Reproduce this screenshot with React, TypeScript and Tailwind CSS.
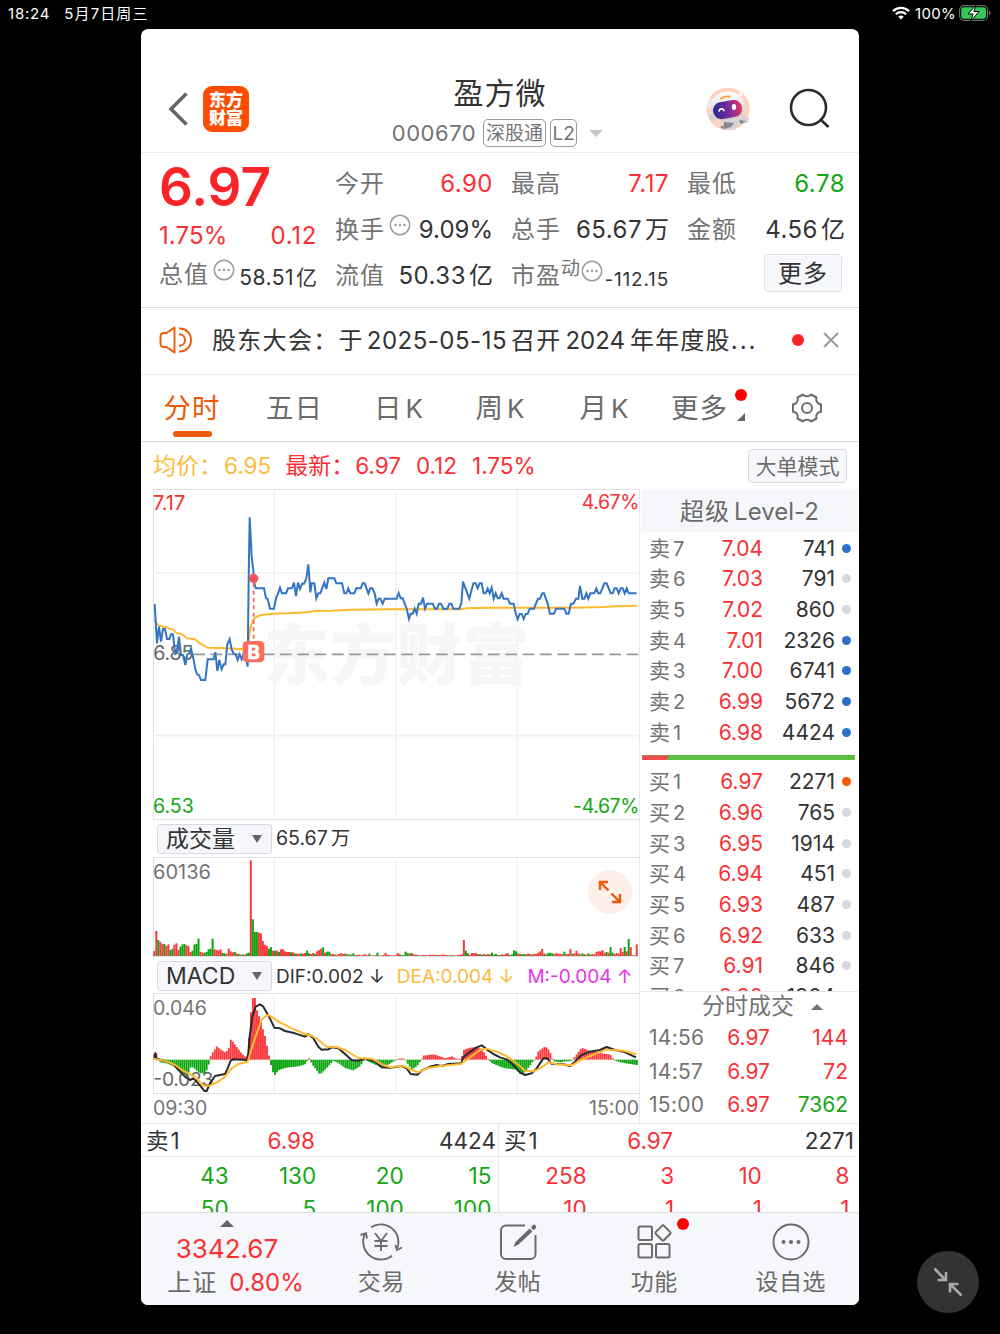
import type { ReactNode } from "react";

const RED = "text-[#fa3034]";
const GREEN = "text-[#14a614]";

/* ---------- chart data (three units per pixel) ---------- */

const PRICE =
  "29,357 36,475 42,425 48,470 54,432 60,432 66,462 73,462 78,448 84,448 91,510 97,490 102,455 108,510 114,510 121,540 127,508 133,505 138,490 145,520 151,552 156,568 162,570 168,585 181,585 188,523 206,523 211,502 217,558 223,525 230,553 236,538 241,538 247,478 254,462 260,493 266,506 272,508 278,525 284,508 290,523 296,505 302,515 308,545 311,280 314,97 320,215 326,265 327,290 332,310 357,310 363,340 368,342 375,371 387,371 393,340 399,326 405,308 411,325 423,325 429,310 441,310 447,293 453,333 459,293 465,312 471,296 477,296 484,280 490,238 496,322 500,295 508,295 514,340 520,325 526,325 538,293 544,312 550,280 568,280 574,295 591,295 598,325 604,325 610,310 616,325 628,325 634,310 647,310 653,295 659,295 670,326 676,310 682,310 689,325 695,356 701,341 706,341 713,356 719,341 755,341 761,324 767,340 773,340 779,355 785,371 792,402 797,386 803,386 809,371 815,386 821,356 828,356 834,338 840,371 846,356 863,356 870,371 876,371 882,356 888,356 895,371 907,371 913,356 919,356 925,371 943,371 949,355 954,290 973,341 985,295 992,295 998,310 1004,295 1010,295 1016,325 1022,325 1028,310 1034,325 1040,308 1046,341 1052,325 1058,340 1064,340 1070,325 1076,341 1088,341 1095,356 1106,356 1112,385 1118,403 1124,387 1130,387 1136,402 1142,387 1148,387 1154,371 1167,371 1173,356 1179,341 1185,341 1192,325 1197,325 1208,356 1215,386 1227,386 1233,371 1258,371 1264,386 1271,386 1278,356 1285,356 1293,341 1300,341 1305,303 1312,341 1318,341 1324,325 1330,341 1336,325 1348,325 1354,310 1360,325 1366,325 1378,295 1385,295 1397,325 1403,325 1409,310 1415,310 1421,325 1427,310 1433,310 1439,325 1445,310 1451,325 1475,325";

const AVERAGE =
  "29,405 35,415 42,422 66,427 75,432 84,433 96,445 110,447 126,460 150,463 165,475 188,488 245,490 285,492 305,492 312,460 316,430 324,405 335,395 350,390 380,386 430,385 485,382 510,378 560,377 620,374 735,373 945,373 965,370 1035,368 1285,368 1375,366 1415,364 1475,362";

const DIF =
  "28,712 31,700 34,716 60,722 85,733 105,755 120,770 135,780 145,775 155,785 168,800 178,813 185,813 195,790 210,768 240,762 248,745 257,722 265,718 305,720 310,700 314,650 322,590 332,560 345,553 355,560 372,590 388,623 405,625 420,633 450,640 480,650 490,643 505,655 520,680 530,689 550,688 560,682 580,685 600,702 620,720 640,722 660,716 690,725 710,742 735,743 755,740 770,738 785,745 797,762 817,764 830,752 855,740 875,735 890,738 910,732 948,730 955,712 970,700 993,683 1010,676 1025,688 1045,702 1065,712 1085,718 1105,735 1125,757 1140,765 1160,760 1175,745 1195,715 1207,715 1220,732 1255,733 1275,738 1290,725 1310,705 1335,695 1365,690 1385,681 1410,690 1435,695 1473,712";

const DEA =
  "27,717 60,722 90,735 120,755 150,770 175,797 195,797 220,785 240,770 260,745 280,732 308,725 320,685 335,640 350,600 365,585 375,587 400,605 440,625 480,642 500,647 520,660 545,680 575,681 600,690 640,714 680,716 710,732 735,742 765,738 780,740 800,750 820,757 845,745 885,738 947,732 975,712 1005,690 1025,686 1055,695 1085,708 1115,730 1140,752 1165,754 1185,745 1210,727 1235,733 1280,736 1305,722 1335,708 1385,689 1435,692 1475,703";

const MACD_KEYS: [number, number][] = [
  [27, 15], [33, 22], [39, 5], [45, -8], [60, -10], [75, -15], [95, -25], [115, -45], [126, -50], [138, -20], [150, -28], [162, -40], [180, -42], [190, -20], [194, 5], [203, 22], [215, 40], [225, 32], [240, 22], [250, 30], [257, 60], [265, 52], [275, 38], [290, 18], [302, 8], [308, 6], [314, 110], [318, 148], [322, 185], [332, 185], [335, 150], [345, 120], [360, 70], [373, 6], [376, -10], [385, -42], [390, -46], [400, -32], [420, -25], [440, -22], [460, -20], [480, -14], [487, -3], [493, 5], [500, -12], [525, -45], [545, -25], [565, -3], [580, -10], [600, -25], [625, -32], [645, -20], [660, 3], [668, -5], [690, -15], [715, -22], [735, -12],
  [750, -2], [765, 4], [780, 3], [785, -8], [800, -30], [815, -20], [827, -3], [835, 12], [865, 16], [885, 10], [900, 4], [920, 10], [935, 2], [948, 3], [957, 30], [975, 36], [1000, 38], [1015, 25], [1028, 3], [1040, -10], [1075, -25], [1115, -30], [1125, -44], [1140, -38], [1160, -10], [1172, 5], [1180, 25], [1200, 40], [1213, 28], [1225, -5], [1245, -8], [1265, -5], [1280, -4], [1290, 10], [1310, 36], [1335, 26], [1375, 18], [1395, 16], [1407, -2], [1435, -10], [1475, -16],
];

function macdAt(x: number) {
  for (let i = 1; i < MACD_KEYS.length; i++) {
    const [x1, h1] = MACD_KEYS[i];
    if (x <= x1) {
      const [x0, h0] = MACD_KEYS[i - 1];
      return h0 + ((h1 - h0) * (x - x0)) / (x1 - x0);
    }
  }
  return -16;
}

// Runs of one-minute bars, each with the minute it starts at; r = rise, g = fall.
const VOLUME_RUNS: [number, string][] = [
  [0, "r15 r75 g48 r42 r36 g36 r30 r35 g18 g22 r34 r38 r18 r15 g38 g38 r38 r30 r14 g16 g35 g36 r32 r12 r10 g10 g12 g20 g52 r20 r18 r17 r20 r26 r16 r14 r11 g12 r8 r6 r8"],
  [36, "r11 r14 g9 r8 r5"],
  [29, "g52 r20 r18 r17 r20 r26 r16 r14 r11 g12 r6 r8 r6 g7 r5 r6"],
  [22, "r32 r12 r10 g10 g12 g20 g22"],
  [34, "g9 g8 r6 r22 r14 r11 g12 r8 g6 r4 g5 r4 g8 g10"],
  [48, "r287 g110 g72 g72 r70 r68 r45 r34 r30 g22 g27 r16 g16 r16 g12 r20 r20 r14 r12 r12 g11 r11 g7 r7 r6 g8 r7 r9 g16 g8 r6 r9 g6 r14 r18 r22 g26 r10 g13 g13 r6 r6 g4 r4 r6 r9 r6 g7 r5 g5 g4 g8 r3 r4 r4 r2 r4 r5 r2 r3 g2 r2 r3"],
  [107, "g7 r2 r2 g2 g10 r2 r2 r3 r9 r4 r3 r2 r2 r2 r9 r6 g3 g3 g13 g9 r8 g9 r5 r5 g3 r2 r3 r3 r3 r2 r4 r3 r4 r3 g3 r3 r4 r4 r3 r3 g2 r3 g2 r2 r3 r3"],
  [153, "r5 r48 g16 g8 r4 r9 r8 r9 g5 r6 g4 r6 g4 r5 r5 g10 g4 g6 r3 g3 r5 r3 r7 r8 g3 g5"],
  [179, "g17 g14 r8 r6 g5 g6 r5 r8 g5 r5 r6 r6 r10 r14 r21 g7 r5 g9 g10 g8 r6 r9 r7 r6 r5"],
  [204, "g13 r6 r6 r21 g7 r8 r16 r8 g5 g8 r6 r4 g8 g4 r6 r5"],
  [220, "r12 r14 r14 r18 r10 g12 r10 g27 g10 r6 r9 r7 r24 r12 g27 r14 g51 r27"],
  [240, "r35"],
];

const VOLUME_BARS: string[] = Array.from({ length: 241 }, () => "r2");
VOLUME_RUNS.forEach(([start, run]) => {
  run.split(" ").forEach((bar, i) => {
    VOLUME_BARS[start + i] = bar;
  });
});
["g28", "g35", "g36", "r32", "r12", "g52"].forEach((bar, i) => {
  VOLUME_BARS[[13, 14, 15, 16, 18, 22][i]] = bar;
});

/* ---------- charts ---------- */

function GridLines({ top, bottom }: { top: number; bottom: number }) {
  return (
    <g stroke="#f0f1f6" strokeWidth="5">
      {[388, 752, 1117].map((x) => (
        <line key={x} x1={x} x2={x} y1={top} y2={bottom} />
      ))}
    </g>
  );
}

function PriceChart() {
  return (
    <svg width="486" height="330" viewBox="24 12 1458 990" className="-mt-px -ml-px block">
      <GridLines top={22} bottom={995} />
      <g stroke="#f0f1f6" strokeWidth="5">
        <line x1="24" x2="1482" y1="264" y2="264" />
        <line x1="24" x2="1482" y1="752" y2="752" />
      </g>
      <text x="356" y="581" fontSize="198" fontWeight="900" fill="#f6f6f7" textLength="796">
        东方财富
      </text>
      <text x="25" y="524" fontSize="59" fill="#666" textLength="120">
        6.85
      </text>
      <line x1="145" x2="1480" y1="508" y2="508" stroke="#999" strokeWidth="5" strokeDasharray="35 17" />
      <polyline points={AVERAGE} fill="none" stroke="#fdb92f" strokeWidth="6" strokeLinejoin="round" />
      <polyline points={PRICE} fill="none" stroke="#3474c0" strokeWidth="6" />
      <line x1="326" x2="326" y1="295" y2="470" stroke="#f96058" strokeWidth="5" strokeDasharray="12 10" />
      <circle cx="326" cy="280" r="14" fill="#f0555a" />
      <rect x="293" y="468" width="65" height="64" rx="13" fill="#fa6e60" />
      <text x="326" y="521" fontSize="56" fontWeight="700" fill="#fff" textAnchor="middle" stroke="#fff" strokeWidth="2">
        B
      </text>
    </svg>
  );
}

function VolumeChart() {
  return (
    <svg width="486" height="98" viewBox="24 111 1458 294" className="-ml-px block">
      <GridLines top={118} bottom={400} />
      {VOLUME_BARS.map((bar, i) => {
        const h = Number(bar.slice(1));
        return (
          <rect
            key={i}
            x={25 + i * 6.03}
            y={405 - h}
            width="6"
            height={h}
            fill={bar[0] === "r" ? "#f8383c" : "#0aa50f"}
          />
        );
      })}
    </svg>
  );
}

function MacdChart() {
  const bars = Array.from({ length: 241 }, (_, i) => 28 + i * 6.03);
  return (
    <svg width="486" height="99" viewBox="24 522 1458 297" className="-ml-px block">
      <GridLines top={530} bottom={815} />
      {bars.map((x) => {
        const h = macdAt(x);
        return (
          <rect
            key={x}
            x={x - 2.5}
            y={h > 0 ? 719 - h : 719}
            width="5.6"
            height={Math.max(2, Math.abs(h))}
            fill={h > 0 ? "#f8383c" : "#0aa50f"}
          />
        );
      })}
      <text x="25" y="799" fontSize="58" fill="#666" textLength="180">
        -0.023
      </text>
      <polyline points={DIF} fill="none" stroke="#2a2a2a" strokeWidth="6" strokeLinejoin="round" />
      <polyline points={DEA} fill="none" stroke="#fdb92f" strokeWidth="6" strokeLinejoin="round" />
    </svg>
  );
}

/* ---------- small parts ---------- */

function MoreDots() {
  return (
    <svg width="22" height="22" viewBox="0 0 22 22" fill="none" className="shrink-0">
      <circle cx="11" cy="11" r="9.7" stroke="#999" strokeWidth="1.5" />
      <g fill="#999">
        <circle cx="6.5" cy="11" r="1.2" />
        <circle cx="11" cy="11" r="1.2" />
        <circle cx="15.5" cy="11" r="1.2" />
      </g>
    </svg>
  );
}

function Stat({ label, value, unit, tone = "text-[#333]", mark }: { label: string; value: string; unit?: string; tone?: string; mark?: ReactNode }) {
  return (
    <div className="flex h-[46px] w-[158px] items-center">
      <span className="tracking-[1px] text-[#737373]">{label}</span>
      {mark}
      <span className={`ml-auto ${mark ? "" : "tracking-[0.500px]"} ${tone}`}>
        {value}
        {unit && <span className="ml-[3px] tracking-normal">{unit}</span>}
      </span>
    </div>
  );
}

function Avatar() {
  return (
    <svg width="44" height="44" viewBox="0 0 44 44">
      <defs>
        <linearGradient id="visor" x1="0" y1="0" x2="1" y2="0">
          <stop offset="0" stopColor="#2b2791" />
          <stop offset=".55" stopColor="#7b2c9a" />
          <stop offset="1" stopColor="#e03a5c" />
        </linearGradient>
        <linearGradient id="shell" x1="0" y1="0" x2="0" y2="1">
          <stop offset="0" stopColor="#ffffff" />
          <stop offset="1" stopColor="#c9c6cd" />
        </linearGradient>
      </defs>
      <circle cx="22" cy="22" r="21.500" fill="#fdd3bd" />
      <path d="M2 30l4-4 4 6-3 3zM15 33c4-3 12-3 17-1l6-3 5 2-1 5-10 1-3 6H20l-6-2 3-3z" fill="#d6d3d8" />
      <path d="M18 35l10 1-3 4-7 2zM33 33l7 1-5 3zM14 40l4-2-1 4z" fill="#8a848e" />
      <ellipse cx="4.500" cy="17" rx="3.500" ry="5" fill="#eceaed" />
      <path d="M5 18C6 8 16 4 25 5c8 1 13 6 14 14 1 8-4 12-14 13-11 2-21-2-20-14z" fill="url(#shell)" />
      <path d="M33 8l1-4 3 6z" fill="#fff" />
      <path d="M14 11c3-2 7-3 11-2l-2 2c-3-1-5 0-8 2z" fill="#f4a64f" />
      <rect x="7" y="14" width="29" height="17" rx="8" transform="rotate(-10 22 22)" fill="url(#visor)" />
      <path d="M13 24c.5-2.500 4-3 5-.5" stroke="#fff" strokeWidth="1.600" fill="none" strokeLinecap="round" />
      <ellipse cx="28" cy="20" rx="2.200" ry="3" fill="#fff" />
    </svg>
  );
}

function BookRow({ side, n, price, volume, dot }: { side: string; n: string; price: string; volume: string; dot?: string }) {
  return (
    <div className="flex h-[30.650px] items-center text-[21px]">
      <span className="w-[50px] text-[#737373]">
        {side}
        <span className="ml-[3px] text-[20px]">{n}</span>
      </span>
      <span className={`w-[64px] text-right ${RED}`}>{price}</span>
      <span className="w-[72px] text-right text-[#333]">{volume}</span>
      <span className={`ml-[7px] size-[9px] rounded-full ${dot ?? "bg-[#d5d8df]"}`} />
    </div>
  );
}

const BLUE_DOT = "bg-[#2d70c8]";
const SELLS: [string, string, string, string?][] = [
  ["7", "7.04", "741", BLUE_DOT],
  ["6", "7.03", "791"],
  ["5", "7.02", "860"],
  ["4", "7.01", "2326", BLUE_DOT],
  ["3", "7.00", "6741", BLUE_DOT],
  ["2", "6.99", "5672", BLUE_DOT],
  ["1", "6.98", "4424", BLUE_DOT],
];
const BUYS: [string, string, string, string?][] = [
  ["1", "6.97", "2271", "bg-[#ee5a05]"],
  ["2", "6.96", "765"],
  ["3", "6.95", "1914"],
  ["4", "6.94", "451"],
  ["5", "6.93", "487"],
  ["6", "6.92", "633"],
  ["7", "6.91", "846"],
  ["8", "6.90", "1904", "bg-transparent"],
];
const TRADES = [
  ["14:56", "6.97", "144", RED],
  ["14:57", "6.97", "72", RED],
  ["15:00", "6.97", "7362", GREEN],
];

function Selector({ label }: { label: string }) {
  return (
    <div className="flex h-[30px] w-[115px] shrink-0 items-center justify-between rounded-[3px] border border-[#d9dbe2] bg-[#f6f7fa] pr-[9px] pl-[8px] text-[23px] text-[#333]">
      <span className="pt-px">{label}</span>
      <span className="h-0 w-0 border-x-[5px] border-t-[8px] border-x-transparent border-t-[#666]" />
    </div>
  );
}

function QueueSide({ label, price, volume, rows, tone }: { label: string; price: string; volume: string; rows: string[][]; tone: string }) {
  return (
    <div className="w-[357px] overflow-hidden">
      <div className="flex h-[33px] items-center border-b border-[#e6e7eb] pt-[3px] pr-[2px] pl-[5px] text-[#333]">
        <span className="w-[100px]">
          {label}
          <span className="ml-[2px]">1</span>
        </span>
        <span className={`w-[69px] text-right ${RED}`}>{price}</span>
        <span className="ml-auto">{volume}</span>
      </div>
      {rows.map((row, i) => (
        <div key={i} className={`flex h-[33px] items-center pt-[6px] ${tone}`}>
          {row.map((cell, j) => (
            <span key={j} className="w-[87.600px] shrink-0 text-right">
              {cell}
            </span>
          ))}
        </div>
      ))}
    </div>
  );
}

function NavItem({ label, children }: { label: string; children: ReactNode }) {
  return (
    <div className="flex w-[136.500px] flex-col items-center pt-[8px] text-[#6b6b6b]">
      <div className="relative h-[42px]">{children}</div>
      <span className="mt-[6px] text-[23px] leading-[26px] tracking-[0.500px]">{label}</span>
    </div>
  );
}

function KTab({ label, width }: { label: string; width: string }) {
  return (
    <div className={`text-center ${width}`}>
      {label}
      <span className="ml-[4px] text-[26px]">K</span>
    </div>
  );
}

/* ---------- page ---------- */

export default function App() {
  return (
    <div className="flex h-[1334px] w-[1000px] flex-col overflow-hidden bg-black font-['Inter','Noto_Sans_CJK_SC',sans-serif] leading-none whitespace-nowrap">
      <div className="flex h-[29px] shrink-0 items-center justify-between pr-[9px] pb-[3px] pl-[8px] text-[15px] text-white">
        <div className="flex gap-[14px]">
          <span className="tracking-[0.800px]">18:24</span>
          <span className="tracking-[1.100px]">5月7日周三</span>
        </div>
        <div className="flex items-center">
          <svg width="18" height="14" viewBox="0 0 18 14" fill="none" stroke="#fff" strokeWidth="2.300">
            <path d="M1 5.200a11.300 11.300 0 0 1 16 0" />
            <path d="M3.900 8.300a7.200 7.200 0 0 1 10.200 0" />
            <path d="M9 13.600l-2.700-2.800a3.800 3.800 0 0 1 5.400 0z" fill="#fff" stroke="none" />
          </svg>
          <span className="ml-[5px] tracking-[0.300px]">100%</span>
          <svg width="32" height="16" viewBox="0 0 32 16" className="ml-[3px]">
            <rect x=".600" y=".600" width="28" height="14.800" rx="4.500" fill="none" stroke="#6b6b6b" strokeWidth="1.200" />
            <rect x="2.200" y="2.200" width="24.800" height="11.600" rx="3" fill="#34c759" />
            <path d="M30 5.500c2 1 2 4 0 5z" fill="#6b6b6b" />
            <path d="M17 0L9 9h5l-2 7 8-9.500h-5z" fill="#fff" stroke="#000" strokeWidth="1" />
          </svg>
        </div>
      </div>

      <main className="relative ml-[141px] flex h-[1276px] w-[718px] flex-col overflow-hidden rounded-[7px] bg-white text-[24px]">
        <header className="flex h-[124px] shrink-0 items-end border-b border-[#ebebee] pb-[3px]">
          <div className="flex h-[80px] w-[220px] items-center pl-[27px]">
            <svg width="20" height="34" viewBox="0 0 20 34" fill="none" stroke="#666" strokeWidth="3.600">
              <path d="M18.500 1.500L3 17l15.500 15.500" />
            </svg>
            <div className="ml-[15px] flex size-[46px] flex-col items-center justify-center rounded-[9px] bg-[#ff4c05] text-[17px] leading-[18px] font-black text-white">
              <span>东方</span>
              <span>财富</span>
            </div>
          </div>
          <div className="flex w-[276px] flex-col items-center pb-[2px]">
            <h1 className="pl-[2px] text-[30px] leading-[40px] font-normal tracking-[1px] text-[#333]">盈方微</h1>
            <div className="mt-[6px] mr-[3px] flex h-[28px] items-center text-[#737373]">
              <span className="text-[22px] tracking-[0.500px]">000670</span>
              <span className="ml-[7px] flex h-[28px] w-[63px] items-center justify-center rounded-[5px] border-[1.500px] border-[#999] text-[19px]">深股通</span>
              <span className="ml-[4px] flex h-[28px] w-[27px] items-center justify-center rounded-[5px] border-[1.500px] border-[#999] text-[19px]">L2</span>
              <span className="ml-[12px] h-0 w-0 border-x-[7px] border-t-[7px] border-x-transparent border-t-[#c8c8c8]" />
            </div>
          </div>
          <div className="ml-auto flex h-[80px] items-center pr-[28px]">
            <Avatar />
            <svg width="42" height="42" viewBox="0 0 42 42" fill="none" stroke="#2b2b2b" strokeWidth="2.600" className="ml-[39px]">
              <circle cx="19.500" cy="19.500" r="17.500" />
              <path d="M31 31l8.500 8" />
            </svg>
          </div>
        </header>

        <section className="flex h-[155px] shrink-0 gap-[18px] border-b border-[#dcdde2] pt-[8px] pl-[18px]">
          <div className="w-[158px]">
            <div className="flex h-[52px] items-center text-[53px] font-semibold text-[#f82428]">6.97</div>
            <div className={`flex h-[39px] items-center justify-between pt-[7px] ${RED}`}>
              <span className="tracking-[0.100px]">1.75%</span>
              <span className="tracking-[0.700px]">0.12</span>
            </div>
            <div className="flex h-[46px] items-center">
              <span className="tracking-[1px] text-[#737373]">总值</span>
              <div className="ml-[4px] pb-[10px]"><MoreDots /></div>
              <span className="ml-auto pt-[4px] text-[21px] tracking-[0.500px] text-[#333]">58.51<span className="ml-[2px] tracking-normal">亿</span></span>
            </div>
          </div>
          <div>
            <Stat label="今开" value="6.90" tone={RED} />
            <Stat label="换手" value="9.09%" mark={<div className="ml-[4px] pb-[10px]"><MoreDots /></div>} />
            <Stat label="流值" value="50.33" unit="亿" />
          </div>
          <div>
            <Stat label="最高" value="7.17" tone={RED} />
            <Stat label="总手" value="65.67" unit="万" />
            <div className="flex h-[46px] w-[158px] items-center text-[#737373]">
              <span className="tracking-[1px]">市盈</span>
              <span className="pb-[15px] text-[19px]">动</span>
              <div className="ml-[1px] pb-[10px]"><MoreDots /></div>
              <span className="ml-auto pt-[6px] text-[19px] tracking-[0.800px] text-[#333]">-112.15</span>
            </div>
          </div>
          <div>
            <Stat label="最低" value="6.78" tone={GREEN} />
            <Stat label="金额" value="4.56" unit="亿" />
            <div className="mt-px ml-[77px] flex h-[38px] w-[78px] items-center justify-center rounded-[4px] border border-[#e0e1e8] bg-[#f6f7fa] pt-px tracking-[1px] text-[#333]">更多</div>
          </div>
        </section>

        <section className="flex h-[67px] shrink-0 items-center border-b border-[#ebebee] pb-[2px] pl-[18px]">
          <svg width="34" height="28" viewBox="0 0 34 28" fill="none" stroke="#ee5a05" strokeWidth="1.900" strokeLinejoin="round">
            <path d="M15.500 1.500v25l-8-5.500H5c-2.500 0-3.500-1.300-3.500-3.500v-7C1.500 8.200 2.500 7 5 7h2.500z" />
            <path d="M20 2.500c6.500-.5 12 4.500 12 11.500s-5.500 12-12 11.500" />
            <path d="M20 8.200c3.800 0 6 2.500 6 5.800s-2.200 5.800-6 5.800" />
          </svg>
          <div className="ml-[19px] flex items-baseline pt-[2px] text-[#333]">
            <span className="tracking-[1.300px]">股东大会：于</span>
            <span className="ml-[3px] tracking-[0.500px]">2025-05-15</span>
            <span className="ml-[4px] tracking-[1.200px]">召开</span>
            <span className="ml-[4px]">2024</span>
            <span className="ml-[5px] tracking-[1.200px]">年年度股</span>
            <span className="text-[24px] tracking-[2px]">...</span>
          </div>
          <span className="mr-[19px] ml-auto size-[12px] rounded-full bg-[#fa2428]" />
          <svg width="16" height="16" viewBox="0 0 16 16" stroke="#999" strokeWidth="2" className="mr-[20px]">
            <path d="M1 1l14 14M15 1L1 15" />
          </svg>
        </section>

        <nav className="flex h-[67px] shrink-0 items-center border-b border-[#d9dae2] pt-px text-[27.500px] text-[#6b6b6b]">
          <div className="relative flex h-full w-[102px] items-center justify-center tracking-[1px] text-[#ee5a05]">
            分时
            <span className="absolute bottom-[4px] left-[32px] h-[6px] w-[39px] rounded-full bg-[#ee5a05]" />
          </div>
          <div className="w-[103px] text-center tracking-[1px]">五日</div>
          <KTab label="日" width="w-[105px]" />
          <KTab label="周" width="w-[98px]" />
          <KTab label="月" width="w-[110px]" />
          <div className="relative w-[101px] pl-[12px] tracking-[1px]">
            更多
            <span className="absolute top-[-6px] left-[76px] size-[12px] rounded-full bg-[#ff0000]" />
            <span className="absolute top-[18px] left-[78px] h-0 w-0 border-b-[8px] border-l-[8px] border-b-[#666] border-l-transparent" />
          </div>
          <svg width="32" height="30" viewBox="0 0 32 30" fill="none" stroke="#6b6b6b" strokeWidth="2" strokeLinejoin="round" className="mb-px ml-[31px]">
            <path d="M12 1.500c1.500 2.300 6.500 2.300 8 0l5.500 3c-1.200 3 .8 6.500 4.500 6.800v7.400c-3.700.3-5.700 3.800-4.500 6.800l-5.500 3c-1.500-2.300-6.500-2.300-8 0l-5.500-3c1.200-3-.8-6.500-4.500-6.800v-7.400c3.700-.3 5.700-3.800 4.500-6.800z" />
            <circle cx="16" cy="15" r="5" />
          </svg>
        </nav>

        <section className="flex h-[47px] shrink-0 items-center pt-px pl-[12px] text-[23px]">
          <span className="text-[#fdbb40]">均价：</span>
          <span className="ml-[2px] text-[22.500px] text-[#fdbb40]">6.95</span>
          <span className={`ml-[14px] ${RED}`}>最新：</span>
          <span className={`ml-[1px] text-[22.500px] ${RED}`}>6.97</span>
          <span className={`ml-[15px] text-[22.500px] ${RED}`}>0.12</span>
          <span className={`ml-[15px] text-[22.500px] ${RED}`}>1.75%</span>
          <span className="mr-[12px] ml-auto flex h-[34px] w-[99px] items-center justify-center rounded-[4px] border border-[#d9dbe2] bg-[#f6f7fa] text-[21px] text-[#6b6b6b]">大单模式</span>
        </section>

        <section className="flex h-[634px] shrink-0">
          <div className="ml-[12px] w-[487px] border-r border-[#e6e7ee] text-[20px] text-[#737373]">
            <div className="relative h-[331px] border-y border-l border-[#dfe1e7]">
              <PriceChart />
              <span className={`absolute top-[3px] -left-px ${RED}`}>7.17</span>
              <span className={`absolute top-[3px] right-0 text-[19.500px] tracking-[-0.400px] ${RED}`}>4.67%</span>
              <span className={`absolute bottom-[3px] -left-px text-[19.500px] ${GREEN}`}>6.53</span>
              <span className={`absolute right-0 bottom-[3px] text-[19.500px] tracking-[-0.400px] ${GREEN}`}>-4.67%</span>
            </div>
            <div className="flex h-[37px] items-center pl-[4px]">
              <Selector label="成交量" />
              <span className="ml-[4px] text-[19.500px] text-[#333]">65.67<span className="ml-[3px]">万</span></span>
            </div>
            <div className="relative h-[100px] border-y border-l border-[#dfe1e7]">
              <VolumeChart />
              <span className="absolute top-[4px] -left-px">60136</span>
              <span className="absolute top-[12px] right-[7px] flex size-[44px] items-center justify-center rounded-full bg-[#feefe8]">
                <svg width="24" height="24" viewBox="0 0 24 24" fill="none" stroke="#ee5a05" strokeWidth="2.400">
                  <path d="M2 10V2h8M2 2l8.500 8.500M22 14v8h-8M22 22l-8.500-8.500" />
                </svg>
              </span>
            </div>
            <div className="flex h-[36px] items-center pt-px pl-[4px]">
              <Selector label="MACD" />
              <span className="ml-[4px] pt-px text-[19px] text-[#333]">DIF:0.002 ↓</span>
              <span className="ml-[12px] pt-px text-[19px] text-[#fdbb40]">DEA:0.004 ↓</span>
              <span className="ml-[13px] pt-px text-[19px] text-[#e632e6]">M:-0.004 ↑</span>
            </div>
            <div className="relative h-[101px] border-y border-l border-[#dfe1e7]">
              <MacdChart />
              <span className="absolute top-[5px] -left-px text-[19.500px]">0.046</span>
            </div>
            <div className="flex h-[29px] items-center justify-between">
              <span className="text-[19.500px]">09:30</span>
              <span className="text-[19.500px]">15:00</span>
            </div>
          </div>

          <aside className="flex w-[218px] flex-col">
            <div className="mt-px ml-px flex h-[42px] shrink-0 items-center justify-center bg-[#f6f7fa] pt-px text-[24px] text-[#6b6b6b]">
              <span className="tracking-[1px]">超级</span>
              <span className="ml-[4px]">Level-2</span>
            </div>
            <div className="h-[459px] shrink-0 overflow-hidden pt-px pl-[9px]">
              {SELLS.map(([n, price, volume, dot]) => (
                <BookRow key={n} side="卖" n={n} price={price} volume={volume} dot={dot} />
              ))}
              <div className="mt-[8px] mb-[6px] -ml-[7px] flex h-[5px] w-[213px] overflow-hidden rounded-[1px] bg-[#5dbd43]">
                <span className="w-[27px] bg-[#f04a4c] [clip-path:polygon(0_0,100%_0,88%_100%,0_100%)]" />
              </div>
              {BUYS.map(([n, price, volume, dot]) => (
                <BookRow key={n} side="买" n={n} price={price} volume={volume} dot={dot} />
              ))}
            </div>
            <div className="flex h-[30px] shrink-0 items-center border-t border-[#e6e7eb] pl-[62px] text-[23px] text-[#737373]">
              分时成交
              <span className="ml-[17px] h-0 w-0 border-x-[6px] border-b-[6px] border-x-transparent border-b-[#737373]" />
            </div>
            {TRADES.map(([time, price, volume, tone]) => (
              <div key={time} className="flex h-[33.500px] items-center pr-[10px] pl-[9px] text-[21px]">
                <span className="w-[57px] tracking-[0.300px] text-[#737373]">{time}</span>
                <span className={`w-[64px] text-right ${RED}`}>{price}</span>
                <span className={`ml-auto ${tone}`}>{volume}</span>
              </div>
            ))}
          </aside>
        </section>

        <section className="flex h-[89px] shrink-0 overflow-hidden border-t border-[#e6e7eb] text-[22.500px]">
          <QueueSide label="卖" price="6.98" volume="4424" tone={GREEN} rows={[["43", "130", "20", "15"], ["50", "5", "100", "100"]]} />
          <span className="w-px bg-[#e6e7eb]" />
          <QueueSide label="买" price="6.97" volume="2271" tone={RED} rows={[["258", "3", "10", "8"], ["10", "1", "1", "1"]]} />
        </section>

        <footer className="flex flex-1 border-t border-[#dcdde2] bg-[#f6f7fa]">
          <div className="flex w-[172px] flex-col items-center">
            <span className="mt-[7px] h-0 w-0 border-x-[7px] border-b-[7px] border-x-transparent border-b-[#666]" />
            <span className={`mt-[9px] text-[26px] leading-[26px] ${RED}`}>3342.67</span>
            <div className="mt-[9px] flex items-center pl-[17px]">
              <span className="text-[24px] tracking-[1px] text-[#6b6b6b]">上证</span>
              <span className={`ml-[12px] text-[24px] ${RED}`}>0.80%</span>
            </div>
          </div>
          <NavItem label="交易">
            <svg width="42" height="42" viewBox="0 0 42 42" fill="none" stroke="#6b6b6b" strokeWidth="1.900">
              <path d="M11 6.200A17.800 17.800 0 0 1 37.500 27M32 34.700A17.800 17.800 0 0 1 5.200 12.500" />
              <path d="M.500 14l5.500-1.800 1 5.300M35.500 24l1.500 5 5-2.500" />
              <path d="M15 12l6 8 6-8M21 20v10M14.500 20h13M14.500 25h13" />
            </svg>
          </NavItem>
          <NavItem label="发帖">
            <svg width="42" height="42" viewBox="0 0 42 42" fill="none" stroke="#6b6b6b" strokeWidth="2">
              <path d="M28 4.500H9a5 5 0 0 0-5 5V33a5 5 0 0 0 5 5h24.500a5 5 0 0 0 5-5V14" />
              <path d="M16.500 26l2-5L32.500 7.500l3 3L21.500 23.500z" fill="#6b6b6b" stroke="none" />
              <path d="M36.500 6.500l.5-.5" strokeWidth="4.500" strokeLinecap="round" />
            </svg>
          </NavItem>
          <NavItem label="功能">
            <svg width="42" height="42" viewBox="0 0 42 42" fill="none" stroke="#6b6b6b" strokeWidth="2">
              <rect x="5.500" y="5.500" width="13.500" height="13.500" rx="1.500" />
              <rect x="5.500" y="23" width="13.500" height="13.500" rx="1.500" />
              <rect x="23" y="23" width="13.500" height="13.500" rx="1.500" />
              <rect x="24.200" y="6.200" width="11.500" height="11.500" rx="1.500" transform="rotate(45 30 12)" />
            </svg>
            <span className="absolute top-[-3px] left-[44px] size-[12px] rounded-full bg-[#ff0000]" />
          </NavItem>
          <NavItem label="设自选">
            <svg width="42" height="42" viewBox="0 0 42 42" fill="none" stroke="#6b6b6b" strokeWidth="1.900">
              <circle cx="21" cy="21" r="17.500" />
              <g fill="#6b6b6b" stroke="none">
                <circle cx="13.500" cy="21" r="2" />
                <circle cx="21" cy="21" r="2" />
                <circle cx="28.500" cy="21" r="2" />
              </g>
            </svg>
          </NavItem>
        </footer>
      </main>

      <button className="fixed top-[1251px] left-[917px] flex size-[62px] items-center justify-center rounded-full bg-[#333]">
        <svg width="30" height="30" viewBox="0 0 30 30" fill="none" stroke="#aaa" strokeWidth="2.600">
          <path d="M1.500 1.500L12 12.500M4.500 13h8.500V5M28.500 28.500L17.500 17.500M17 25.500V17h8.500" />
        </svg>
      </button>
    </div>
  );
}
